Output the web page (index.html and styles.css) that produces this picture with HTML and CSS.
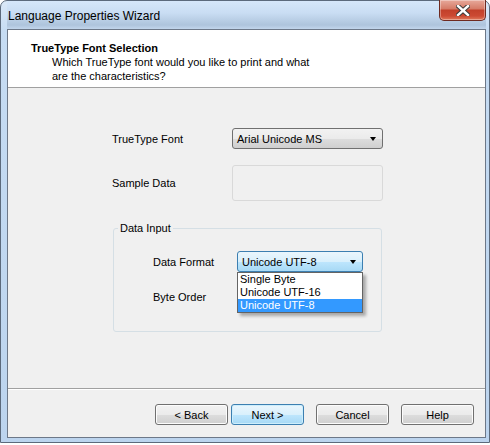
FILE: index.html
```html
<!DOCTYPE html>
<html lang="en">
<head>
    <meta charset="UTF-8">
    <title>Language Properties Wizard</title>
    <link rel="stylesheet" href="styles.css">
</head>
<body>
    <div class="window">
        <div class="titlebar">
            <span class="title">Language Properties Wizard</span>
            <button class="close" type="button">
                <svg width="14" height="11" viewBox="0 0 14 11">
                    <path d="M2 1 L12 10 M12 1 L2 10" stroke="#3b3b3b" stroke-width="4.4" stroke-linecap="square"/>
                    <path d="M2 1 L12 10 M12 1 L2 10" stroke="#ffffff" stroke-width="2.4" stroke-linecap="square"/>
                </svg>
            </button>
        </div>
        <div class="client">
            <header class="wizard-head">
                <h1>TrueType Font Selection</h1>
                <p>Which TrueType font would you like to print and what<br>are the characteristics?</p>
            </header>
            <main class="page">
                <div class="row">
                    <label>TrueType Font</label>
                    <div class="combo wide">Arial Unicode MS<span class="arrow"></span></div>
                </div>
                <div class="row sample">
                    <label>Sample Data</label>
                    <div class="sample-box"></div>
                </div>
                <fieldset class="group">
                    <legend>Data Input</legend>
                    <div class="row inner">
                        <label>Data Format</label>
                        <div class="combo focused">Unicode UTF-8<span class="arrow"></span>
                            <ul class="droplist">
                                <li>Single Byte</li>
                                <li>Unicode UTF-16</li>
                                <li class="selected">Unicode UTF-8</li>
                            </ul>
                        </div>
                    </div>
                    <div class="row inner">
                        <label>Byte Order</label>
                    </div>
                </fieldset>
            </main>
            <footer class="buttons">
                <button class="btn" type="button">&lt; Back</button>
                <button class="btn default" type="button">Next &gt;</button>
                <button class="btn" type="button">Cancel</button>
                <button class="btn" type="button">Help</button>
            </footer>
        </div>
    </div>
</body>
</html>
```

FILE: styles.css
```css
body {
    margin: 0;
    padding: 0;
    background-color: #ffffff;
    font-family: "Liberation Sans", Arial, sans-serif;
    font-size: 11px;
    color: #000;
}

.window {
    box-sizing: border-box;
    width: 490px;
    height: 443px;
    border: 1px solid #5c6a7c;
    border-radius: 7px 7px 0 0;
    padding: 0 3px 4px 6px;
    background: linear-gradient(to bottom, #dbe9f8 0, #c6dcf3 30px, #bcd4ee 100%);
    display: flex;
    flex-direction: column;
}

.titlebar {
    height: 28px;
    display: flex;
    align-items: flex-start;
    background: linear-gradient(to bottom, #d6e7fa 0, #c9ddf3 12px, #aec4dc 24px, #c2d6ec 28px);
}

.title {
    margin-top: 8px;
    margin-left: 1px;
    font-size: 12px;
    line-height: 15px;
    color: #000;
}

.close {
    margin-left: auto;
    margin-top: -1px;
    width: 47px;
    height: 21px;
    padding: 0;
    border: 1px solid #6e2a20;
    border-top: none;
    border-radius: 0 0 5px 5px;
    background: linear-gradient(to bottom, #e7a99b 0, #d57a66 45%, #c2402a 50%, #cc4a33 80%, #e07a5c 100%);
    display: flex;
    align-items: center;
    justify-content: center;
    box-shadow: inset 0 0 0 1px rgba(255, 255, 255, 0.35);
}

.client {
    height: 409px;
    box-sizing: border-box;
    border: 1px solid #6d7888;
    background-color: #f0f0f0;
    display: flex;
    flex-direction: column;
}

.wizard-head {
    height: 58px;
    box-sizing: border-box;
    background-color: #ffffff;
    border-bottom: 1px solid #a0a0a0;
    padding: 11px 0 0 23px;
}

.wizard-head h1 {
    margin: 0;
    font-size: 11px;
    line-height: 14px;
    font-weight: bold;
}

.wizard-head p {
    margin: 0 0 0 21px;
    line-height: 14px;
}

.page {
    height: 301px;
    box-sizing: border-box;
    border-bottom: 1px solid #a0a0a0;
    padding: 40px 0 0 104px;
}

.row {
    display: grid;
    grid-template-columns: 120px 151px;
    align-items: center;
}

.row label {
    line-height: 14px;
}

.sample {
    margin-top: 16px;
}

.sample-box {
    height: 36px;
    box-sizing: border-box;
    border: 1px solid #d9d9d9;
    border-radius: 3px;
    background-color: #f0f0f0;
}

.combo {
    position: relative;
    height: 21px;
    box-sizing: border-box;
    border: 1px solid #707070;
    border-radius: 3px;
    padding: 3px 0 0 4px;
    line-height: 14px;
    background: linear-gradient(to bottom, #f2f2f2 0, #ebebeb 50%, #dddddd 51%, #cfcfcf 100%);
}

.combo.focused {
    border-color: #3c7fb1;
    background: linear-gradient(to bottom, #eaf6fd 0, #d9f0fc 50%, #bee6fd 51%, #a7d9f5 100%);
}

.arrow {
    position: absolute;
    right: 6px;
    top: 8px;
    width: 0;
    height: 0;
    border-left: 3.5px solid transparent;
    border-right: 3.5px solid transparent;
    border-top: 4px solid #000;
}

.droplist {
    position: absolute;
    left: -1px;
    top: 20px;
    width: 126px;
    box-sizing: border-box;
    margin: 0;
    padding: 0;
    list-style: none;
    background-color: #ffffff;
    border: 1px solid #646464;
    box-shadow: 3px 3px 3px rgba(0, 0, 0, 0.3);
    z-index: 2;
}

.droplist li {
    height: 13px;
    line-height: 13px;
    padding-left: 2px;
}

.droplist li.selected {
    background-color: #3399ff;
    color: #ffffff;
}

.group {
    width: 269px;
    box-sizing: border-box;
    margin: 21px 0 0 1px;
    padding: 16px 0 24px 0;
    border: 1px solid #d5dfe5;
    border-radius: 3px;
}

.group legend {
    padding: 0 2px;
    margin-left: 4px;
    line-height: 13px;
}

.row.inner {
    margin-left: 39px;
    grid-template-columns: 84px 126px;
}

.row.inner + .row.inner {
    margin-top: 14px;
    height: 21px;
}

.buttons {
    flex: 1;
    display: flex;
    align-items: flex-start;
    padding: 14px 0 0 147px;
    border-top: 1px solid #ffffff;
}

.btn {
    width: 73px;
    height: 21px;
    box-sizing: border-box;
    margin-left: 12px;
    padding: 0;
    border: 1px solid #707070;
    border-radius: 3px;
    font-family: "Liberation Sans", Arial, sans-serif;
    font-size: 11px;
    color: #000;
    background: linear-gradient(to bottom, #f2f2f2 0, #ebebeb 50%, #dddddd 51%, #cfcfcf 100%);
    box-shadow: inset 0 0 0 1px #fcfcfc;
}

.btn:first-child {
    margin-left: 0;
}

.btn.default {
    margin-left: 3px;
    border-color: #3c7fb1;
    background: linear-gradient(to bottom, #eaf6fd 0, #d9f0fc 50%, #bee6fd 51%, #a7d9f5 100%);
    box-shadow: inset 0 0 0 1px #cdeefc;
}
```
